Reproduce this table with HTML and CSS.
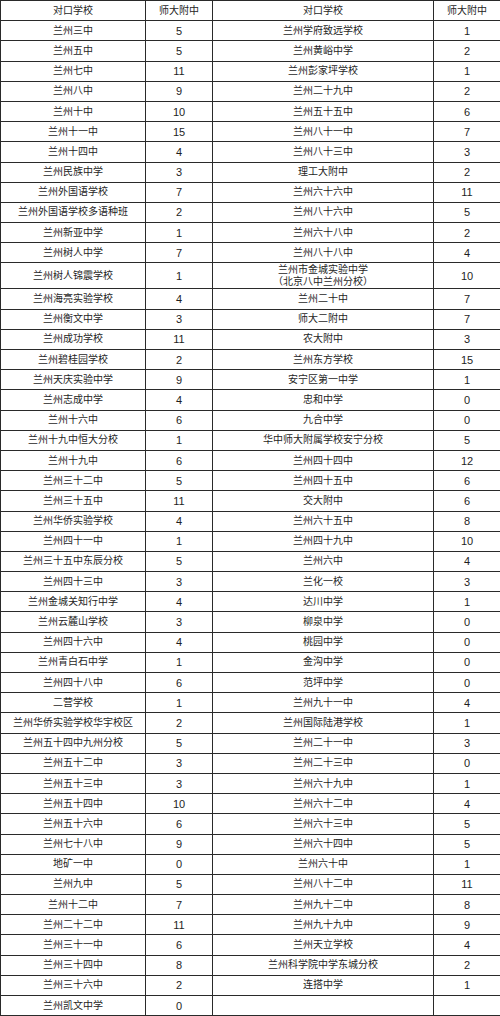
FILE: index.html
```html
<!DOCTYPE html>
<html lang="zh-CN">
<head>
<meta charset="utf-8">
<title>对口学校</title>
<link rel="stylesheet" href="styles.css">
</head>
<body>
<table class="sheet">
<colgroup><col class="c-name"><col class="c-num"><col class="c-name2"><col class="c-num2"></colgroup>
<tbody>
<tr class="head"><td>对口学校</td><td>师大附中</td><td>对口学校</td><td>师大附中</td></tr>
<tr><td>兰州三中</td><td class="n">5</td><td>兰州学府致远学校</td><td class="n">1</td></tr>
<tr><td>兰州五中</td><td class="n">5</td><td>兰州黄峪中学</td><td class="n">2</td></tr>
<tr><td>兰州七中</td><td class="n">11</td><td>兰州彭家坪学校</td><td class="n">1</td></tr>
<tr><td>兰州八中</td><td class="n">9</td><td>兰州二十九中</td><td class="n">2</td></tr>
<tr><td>兰州十中</td><td class="n">10</td><td>兰州五十五中</td><td class="n">6</td></tr>
<tr><td>兰州十一中</td><td class="n">15</td><td>兰州八十一中</td><td class="n">7</td></tr>
<tr><td>兰州十四中</td><td class="n">4</td><td>兰州八十三中</td><td class="n">3</td></tr>
<tr><td>兰州民族中学</td><td class="n">3</td><td>理工大附中</td><td class="n">2</td></tr>
<tr><td>兰州外国语学校</td><td class="n">7</td><td>兰州六十六中</td><td class="n">11</td></tr>
<tr><td>兰州外国语学校多语种班</td><td class="n">2</td><td>兰州八十六中</td><td class="n">5</td></tr>
<tr><td>兰州新亚中学</td><td class="n">1</td><td>兰州六十八中</td><td class="n">2</td></tr>
<tr><td>兰州树人中学</td><td class="n">7</td><td>兰州八十八中</td><td class="n">4</td></tr>
<tr class="tall"><td>兰州树人锦震学校</td><td class="n">1</td><td class="two">兰州市金城实验中学<br>（北京八中兰州分校）</td><td class="n">10</td></tr>
<tr><td>兰州海亮实验学校</td><td class="n">4</td><td>兰州二十中</td><td class="n">7</td></tr>
<tr><td>兰州衡文中学</td><td class="n">3</td><td>师大二附中</td><td class="n">7</td></tr>
<tr><td>兰州成功学校</td><td class="n">11</td><td>农大附中</td><td class="n">3</td></tr>
<tr><td>兰州碧桂园学校</td><td class="n">2</td><td>兰州东方学校</td><td class="n">15</td></tr>
<tr><td>兰州天庆实验中学</td><td class="n">9</td><td>安宁区第一中学</td><td class="n">1</td></tr>
<tr><td>兰州志成中学</td><td class="n">4</td><td>忠和中学</td><td class="n">0</td></tr>
<tr><td>兰州十六中</td><td class="n">6</td><td>九合中学</td><td class="n">0</td></tr>
<tr><td>兰州十九中恒大分校</td><td class="n">1</td><td>华中师大附属学校安宁分校</td><td class="n">5</td></tr>
<tr><td>兰州十九中</td><td class="n">6</td><td>兰州四十四中</td><td class="n">12</td></tr>
<tr><td>兰州三十二中</td><td class="n">5</td><td>兰州四十五中</td><td class="n">6</td></tr>
<tr><td>兰州三十五中</td><td class="n">11</td><td>交大附中</td><td class="n">6</td></tr>
<tr><td>兰州华侨实验学校</td><td class="n">4</td><td>兰州六十五中</td><td class="n">8</td></tr>
<tr><td>兰州四十一中</td><td class="n">1</td><td>兰州四十九中</td><td class="n">10</td></tr>
<tr><td>兰州三十五中东辰分校</td><td class="n">5</td><td>兰州六中</td><td class="n">4</td></tr>
<tr><td>兰州四十三中</td><td class="n">3</td><td>兰化一校</td><td class="n">3</td></tr>
<tr><td>兰州金城关知行中学</td><td class="n">4</td><td>达川中学</td><td class="n">1</td></tr>
<tr><td>兰州云麓山学校</td><td class="n">3</td><td>柳泉中学</td><td class="n">0</td></tr>
<tr><td>兰州四十六中</td><td class="n">4</td><td>桃园中学</td><td class="n">0</td></tr>
<tr><td>兰州青白石中学</td><td class="n">1</td><td>金沟中学</td><td class="n">0</td></tr>
<tr><td>兰州四十八中</td><td class="n">6</td><td>范坪中学</td><td class="n">0</td></tr>
<tr><td>二营学校</td><td class="n">1</td><td>兰州九十一中</td><td class="n">4</td></tr>
<tr><td>兰州华侨实验学校华宇校区</td><td class="n">2</td><td>兰州国际陆港学校</td><td class="n">1</td></tr>
<tr><td>兰州五十四中九州分校</td><td class="n">5</td><td>兰州二十一中</td><td class="n">3</td></tr>
<tr><td>兰州五十二中</td><td class="n">3</td><td>兰州二十三中</td><td class="n">0</td></tr>
<tr><td>兰州五十三中</td><td class="n">3</td><td>兰州六十九中</td><td class="n">1</td></tr>
<tr><td>兰州五十四中</td><td class="n">10</td><td>兰州六十二中</td><td class="n">4</td></tr>
<tr><td>兰州五十六中</td><td class="n">6</td><td>兰州六十三中</td><td class="n">5</td></tr>
<tr><td>兰州七十八中</td><td class="n">9</td><td>兰州六十四中</td><td class="n">5</td></tr>
<tr><td>地矿一中</td><td class="n">0</td><td>兰州六十中</td><td class="n">1</td></tr>
<tr><td>兰州九中</td><td class="n">5</td><td>兰州八十二中</td><td class="n">11</td></tr>
<tr><td>兰州十二中</td><td class="n">7</td><td>兰州九十二中</td><td class="n">8</td></tr>
<tr><td>兰州二十二中</td><td class="n">11</td><td>兰州九十九中</td><td class="n">9</td></tr>
<tr><td>兰州三十一中</td><td class="n">6</td><td>兰州天立学校</td><td class="n">4</td></tr>
<tr><td>兰州三十四中</td><td class="n">8</td><td>兰州科学院中学东城分校</td><td class="n">2</td></tr>
<tr><td>兰州三十六中</td><td class="n">2</td><td>连搭中学</td><td class="n">1</td></tr>
<tr><td>兰州凯文中学</td><td class="n">0</td><td></td><td class="n"></td></tr>
</tbody>
</table>
</body>
</html>
```
FILE: styles.css
```css
html, body {
  margin: 0;
  padding: 0;
  background: #ffffff;
}

.sheet {
  border-collapse: collapse;
  table-layout: fixed;
  width: 500px;
  font-family: "Liberation Sans", "Noto Sans CJK SC", sans-serif;
  font-size: 10px;
  color: #1e1e1e;
}

.c-name { width: 145px; }
.c-num { width: 67px; }
.c-name2 { width: 221px; }
.c-num2 { width: 67px; }

.sheet td {
  border: 1px solid #2a2a2a;
  text-align: center;
  vertical-align: middle;
  padding: 0;
  height: 19.2px;
  line-height: 12px;
  white-space: nowrap;
  overflow: hidden;
}

.sheet td.n {
  font-size: 11px;
}

.sheet tr.tall td {
  height: 25px;
}

.sheet td.two {
  line-height: 12px;
}
```
